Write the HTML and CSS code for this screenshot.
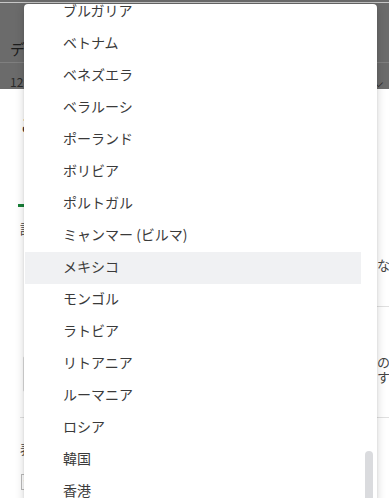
FILE: index.html
```html
<!DOCTYPE html>
<html lang="ja">
<head>
<meta charset="utf-8">
<link rel="stylesheet" href="styles.css">
</head>
<body>
<div class="page">
  <header class="hdr">
    <div class="hdr-line"></div>
    <div class="hdr-title">データのエクスポート</div>
    <div class="hdr-sub">
      <span>12 件の項目</span>
      <span class="chev">&#x2335;</span>
    </div>
  </header>
  <main class="content">
    <h2 class="heading">ご利用の国を選択</h2>
    <div class="tabs"><span class="tab active">基本設定</span></div>
    <div class="row">
      <p class="label">詳細</p>
      <p class="side">なの</p>
    </div>
    <div class="divider-right"></div>
    <div class="row two">
      <div class="left-col">
        <p class="label small">ⅰ</p>
        <div class="textbox"></div>
      </div>
      <p class="side">の所<br>すき</p>
    </div>
    <div class="divider"></div>
    <p class="label">表示</p>
    <div class="selectbox">▾</div>
  </main>

  <div class="menu">
    <div class="list">
      <ul class="items">
        <li>ブルガリア</li>
        <li>ベトナム</li>
        <li>ベネズエラ</li>
        <li>ベラルーシ</li>
        <li>ポーランド</li>
        <li>ボリビア</li>
        <li>ポルトガル</li>
        <li>ミャンマー (ビルマ)</li>
        <li class="hover">メキシコ</li>
        <li>モンゴル</li>
        <li>ラトビア</li>
        <li>リトアニア</li>
        <li>ルーマニア</li>
        <li>ロシア</li>
        <li>韓国</li>
        <li>香港</li>
      </ul>
    </div>
    <div class="gutter"><div class="thumb"></div></div>
  </div>
</div>
</body>
</html>
```

FILE: styles.css
```css
* { box-sizing: border-box; }
html, body { margin: 0; padding: 0; }
body {
  width: 389px;
  height: 498px;
  overflow: hidden;
  background: #fff;
  font-family: "Noto Sans CJK JP", "Noto Sans", sans-serif;
}
.page { position: relative; width: 389px; height: 498px; overflow: hidden; }

.hdr {
  background: #6b6b6b;
  height: 89px;
  overflow: hidden;
  display: flex;
  flex-direction: column;
}
.hdr-line { margin-top: 2px; height: 1px; background: #c6c6c6; }
.hdr-title {
  height: 64px;
  padding: 0 10px 4px;
  display: flex;
  align-items: flex-end;
  font-size: 15px;
  line-height: 18px;
  color: #1c1c1c;
  border-bottom: 1px solid #7f7f7f;
}
.hdr-sub {
  display: flex;
  justify-content: space-between;
  padding: 12px 6px 0 10px;
  font-size: 12px;
  line-height: 14px;
  color: #2a2a2a;
}
.chev { font-size: 12px; color: #1a1a1a; }

.content { padding: 0 0 0 20px; color: #444; font-size: 13px; }
.heading { margin: 22px 0 0; font-size: 18px; font-weight: 400; color: #333; line-height: 26px; }
.tabs { margin-top: 30px; margin-left: -2px; height: 40px; display: flex; align-items: flex-end; }
.tab { padding: 0 0 8px 14px; width: 100px; font-size: 13px; color: #188038; }
.tab.active { border-bottom: 3px solid #188038; }
.row { display: flex; justify-content: space-between; }
.label { margin: 0; font-size: 13px; line-height: 18px; color: #444; }
.row .label { margin-top: 13px; }
.side { margin: 50px 0 0; width: 12px; overflow: hidden; white-space: nowrap; font-size: 13px; line-height: 15px; color: #444; }
.divider-right { margin: 34px 0 0 357px; height: 1px; background: #e0e0e0; }
.two .left-col { display: flex; flex-direction: column; }
.row .label.small { margin-top: 24px; font-size: 11px; }
.textbox { margin: 7px 0 0 3px; width: 200px; height: 36px; border: 1px solid #ddd; border-radius: 2px; }
.two .side { margin-top: 47px; }
.divider { margin: 25px 0 0 0; height: 1px; background: #e0e0e0; }
.content > .label { margin-top: 22px; }
.selectbox { margin: 16px 0 0 1px; width: 120px; height: 16px; border: 1px solid #bbb; font-size: 9px; color: #777; padding-left: 2px; line-height: 14px; }

.menu {
  position: absolute;
  left: 24px;
  top: 4px;
  width: 353px;
  height: 500px;
  background: #fff;
  border-radius: 4px 4px 0 0;
  box-shadow: 0 2px 10px rgba(0,0,0,0.18), 0 0 2px rgba(0,0,0,0.1);
  display: flex;
  padding-left: 1px;
  overflow: hidden;
}
.list { flex: 1; overflow: hidden; }
.items { list-style: none; margin: -8px 0 0; padding: 0; }
.items li {
  height: 32px;
  line-height: 28px;
  padding: 0 0 4px 38px;
  font-size: 14px;
  color: #3a3a3a;
  white-space: nowrap;
}
.items li.hover { background: #f0f1f3; }
.gutter { width: 16px; display: flex; justify-content: center; padding-top: 447px; }
.thumb { width: 8px; height: 80px; background: #dadbde; border-radius: 4px 4px 0 0; }
```
